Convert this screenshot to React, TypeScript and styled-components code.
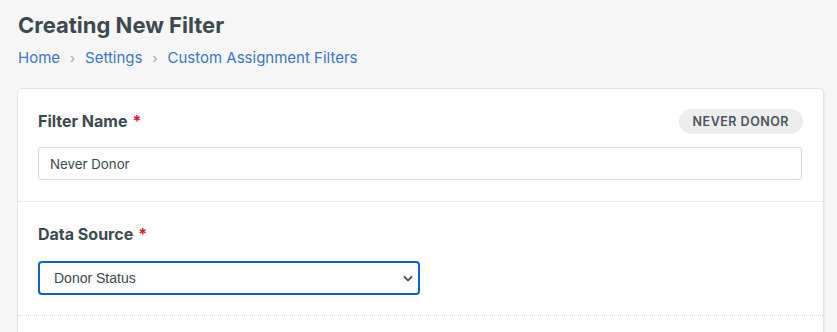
import React from "react";
import styled, { createGlobalStyle } from "styled-components";

const Global = createGlobalStyle`
  html, body { margin: 0; padding: 0; background: #f6f6f6; }
  body { font-family: Inter, "Noto Sans", sans-serif; color: #3d4950; }
  * { box-sizing: border-box; }
`;

const Page = styled.div`
  padding: 12px 15px 0 17px;
  width: 837px;
  height: 332px;
  overflow: hidden;
`;

const Title = styled.h1`
  margin: 0 0 0 1px;
  font-size: 22px;
  line-height: 26px;
  font-weight: 700;
  color: #3d4950;
`;

const Crumbs = styled.nav`
  display: flex;
  align-items: center;
  gap: 10px;
  margin: 10px 0 0 1px;
  font-size: 15px;
  line-height: 20px;
`;

const Crumb = styled.a`
  color: #3a78c4;
  text-decoration: none;
`;

const Sep = styled.span`
  color: #9aa1a6;
  font-size: 13px;
`;

const Card = styled.div`
  margin-top: 20px;
  background: #fff;
  border: 1px solid #e4e4e4;
  border-radius: 5px;
  box-shadow: 1px 1px 2px rgba(0, 0, 0, 0.06);
  width: 807px;
  height: 260px;
`;

const Section = styled.div<{ $pad: string }>`
  padding: ${(p) => p.$pad};
  border-bottom: 1px dotted #d6d6d6;
`;

const Header = styled.div`
  display: flex;
  align-items: center;
  justify-content: space-between;
  height: 26px;
`;

const Label = styled.label`
  display: block;
  font-size: 16px;
  font-weight: 700;
  color: #3d4950;
  line-height: 20px;
`;

const Star = styled.span`
  color: #e0141e;
  margin-left: 5px;
`;

const Badge = styled.span`
  display: inline-flex;
  align-items: center;
  height: 25px;
  padding: 0 14px;
  border-radius: 13px;
  background: #ededed;
  color: #4a555c;
  font-size: 12.5px;
  font-weight: 600;
  letter-spacing: 0.5px;
`;

const Input = styled.input`
  display: block;
  width: 764px;
  height: 33px;
  margin-top: 13px;
  padding: 0 11px;
  border: 1px solid #d9d9d9;
  border-radius: 3px;
  font-family: Inter, sans-serif;
  font-size: 13.3px;
  color: #3d4950;
  outline: none;
`;

const Select = styled.select`
  display: block;
  width: 382px;
  height: 34px;
  margin-top: 17px;
  padding: 0 0 0 14px;
  border: 2px solid #0a64cc;
  border-radius: 4px;
  font-family: "Liberation Sans", Arial, sans-serif;
  font-size: 14px;
  color: #3d4950;
  background: #fff;
  outline: none;
  appearance: none;
  background-image: url("data:image/svg+xml,%3Csvg xmlns='http://www.w3.org/2000/svg' width='10' height='7' viewBox='0 0 10 7'%3E%3Cpath d='M1 1.5l4 4 4-4' fill='none' stroke='%234a555c' stroke-width='1.8'/%3E%3C/svg%3E");
  background-repeat: no-repeat;
  background-position: right 5px center;
`;

export default function App() {
  return (
    <>
      <Global />
      <Page>
        <Title>Creating New Filter</Title>
        <Crumbs>
          <Crumb href="#">Home</Crumb>
          <Sep>›</Sep>
          <Crumb href="#">Settings</Crumb>
          <Sep>›</Sep>
          <Crumb href="#">Custom Assignment Filters</Crumb>
        </Crumbs>
        <Card>
          <Section $pad="19px 20px 21px 20px">
            <Header>
              <Label>
                Filter Name<Star>*</Star>
              </Label>
              <Badge>NEVER DONOR</Badge>
            </Header>
            <Input defaultValue="Never Donor" />
          </Section>
          <Section $pad="22px 20px 20px 20px">
            <Label>
              Data Source<Star>*</Star>
            </Label>
            <Select defaultValue="donor">
              <option value="donor">Donor Status</option>
            </Select>
          </Section>
        </Card>
      </Page>
    </>
  );
}
